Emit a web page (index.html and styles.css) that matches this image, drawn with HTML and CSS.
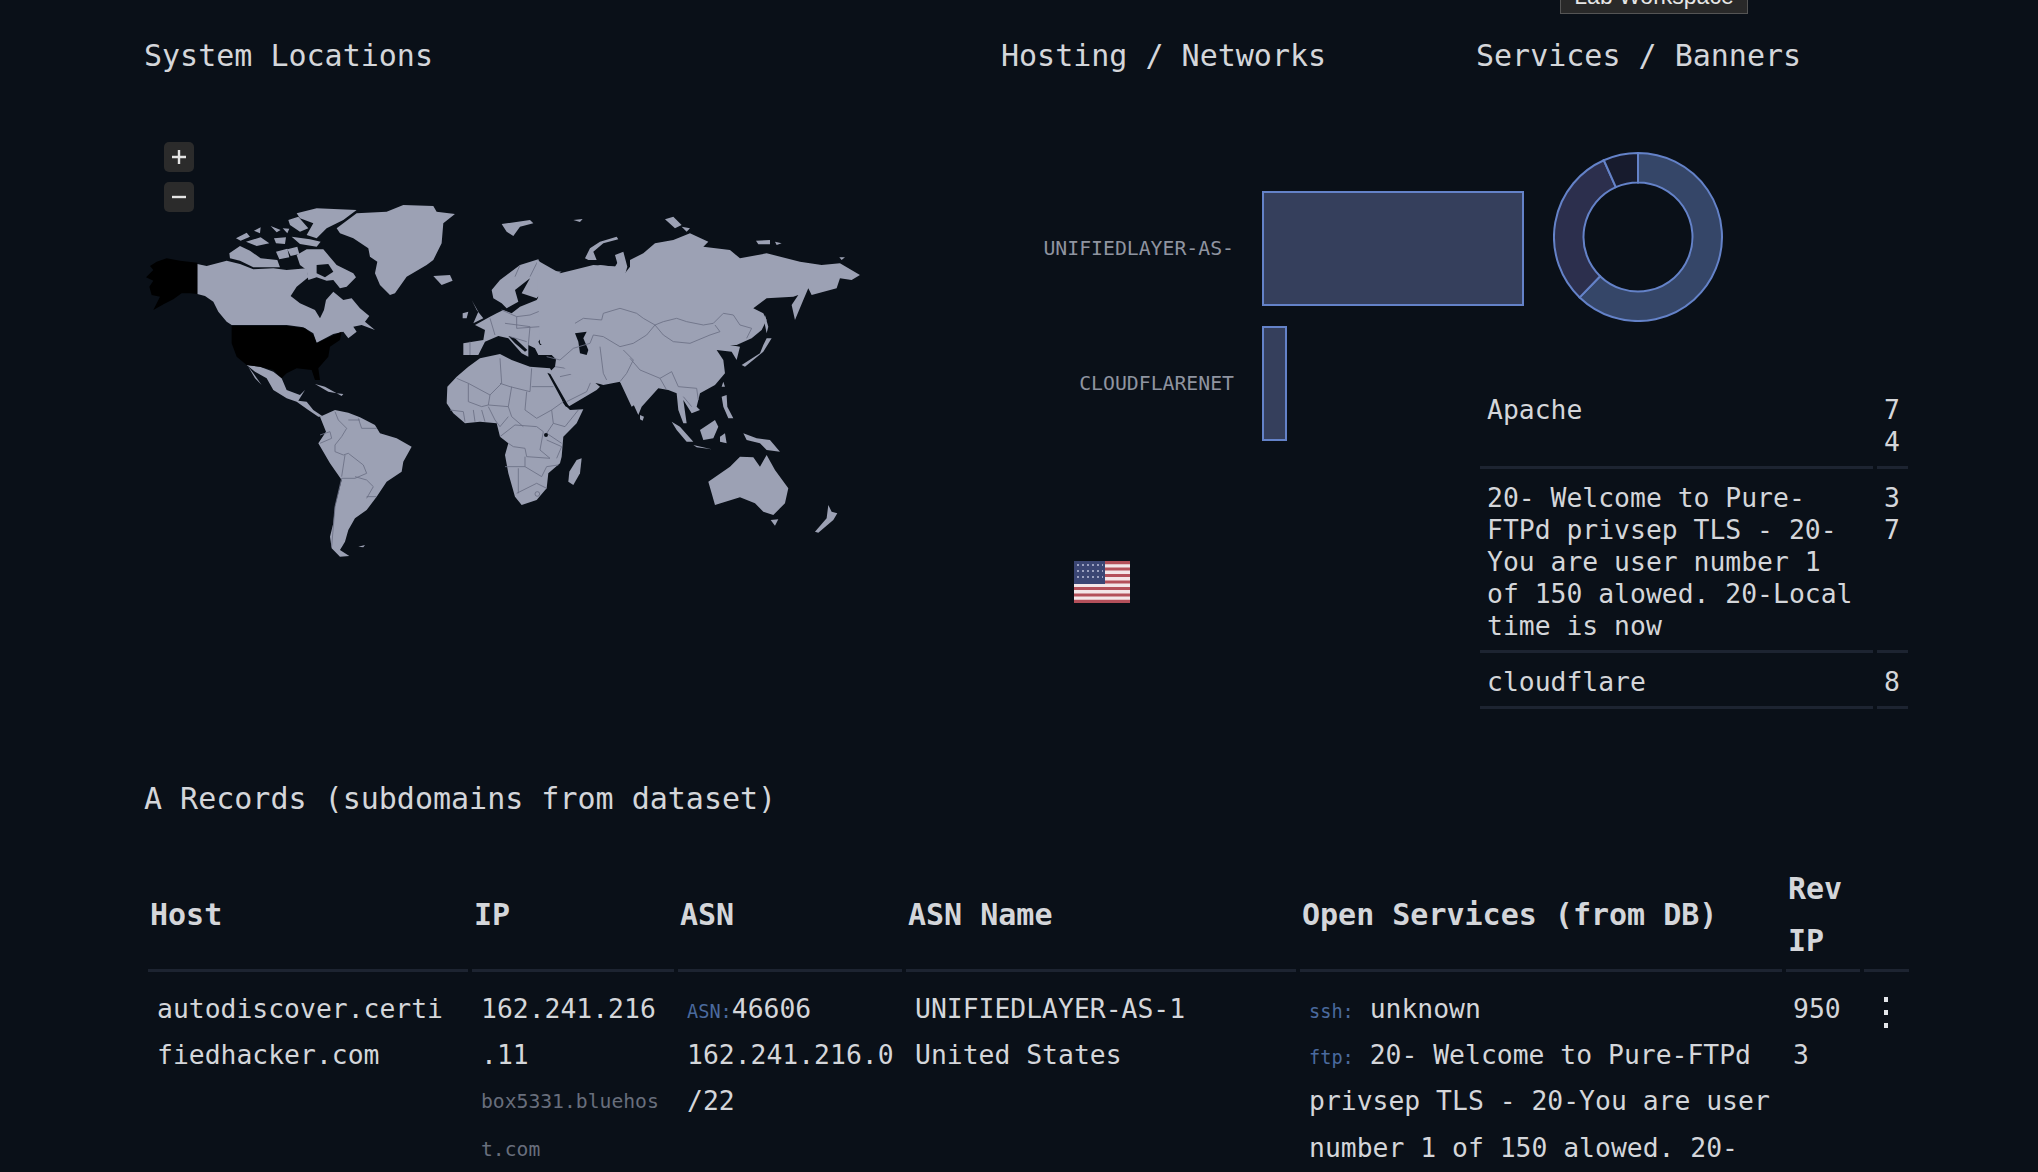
FILE: index.html
```html
<!DOCTYPE html>
<html lang="en">
<head>
	<meta charset="utf-8">
	<title>Lab Workspace</title>
	<link rel="stylesheet" href="styles.css">
</head>
<body>

<div class="tooltip">Lab Workspace</div>

<div class="page">
	<div class="summary">

		<section>
			<h2>System Locations</h2>
			<div class="map">
				<div class="zoom-btns">
					<div class="zoom-btn">
						<svg viewBox="0 0 30 30"><path d="M15 8v14M8 15h14"/></svg>
					</div>
					<div class="zoom-btn">
						<svg viewBox="0 0 30 30"><path d="M8 15h14"/></svg>
					</div>
				</div>
				<svg class="world" width="740" height="440" viewBox="144 130 740 440">
					<!-- north america -->
					<g transform="translate(140 190) scale(.3333)">
						<path class="land" d="M172 222L200 228 260 212 300 222 340 238 400 235 440 240 500 235 505 262 470 290 452 318 480 340 525 360 540 385 552 360 558 330 580 305 610 330 635 325 660 355 688 378 675 395 705 420 665 405 640 410 650 425 625 445 610 425 580 432 530 458 520 430 490 412 440 405 275 405 260 395 235 365 220 335 195 318 172 312Z"/>
						<path class="land" d="M470 195L500 178 550 178 590 225 640 250 648 262 620 290 600 295 580 270 560 272 530 262 505 270 500 240 480 225Z"/>
						<path class="bg" d="M530 225L565 222 580 245 555 262 530 250Z"/>
						<path class="land" d="M268 190L300 168 330 182 362 205 412 210 420 232 340 232 300 212 270 205Z"/>
						<path class="land" d="M288 145L320 128 330 140 302 152ZM318 155L362 142 388 160 350 168ZM392 108L422 120 410 127ZM402 145L438 142 435 162 408 160ZM408 185L442 176 448 202 418 208ZM442 178L472 170 478 192 452 198ZM342 122L362 112 360 130ZM428 115L448 116 442 130Z"/>
						<path class="land" d="M470 70L530 55 650 60 610 90 560 115 530 145 500 135 520 100 480 85ZM445 90L475 80 505 115 480 125 450 105ZM455 140L510 148 542 155 530 170 480 162Z"/>
						<path class="land" d="M590 115L650 70 740 65 790 45 880 48 890 65 945 72 910 100 905 160 880 210 860 225 800 260 765 310 750 315 720 285 705 250 712 215 690 200 685 175 640 145 600 130Z"/>
						<path class="land" d="M880 258L930 255 938 272 905 285Z"/>
						<path class="land" d="M320 525L360 530 400 545 425 565 440 600 480 615 495 600 475 632 500 635 520 660 550 680 535 680 505 660 470 635 440 625 400 600 380 565 345 545ZM325 530L340 550 365 585 345 565Z"/>
						<path class="land" d="M525 582L555 590 590 610 565 605ZM590 610L610 612 605 618Z"/>
						<path class="hit" d="M172 218L120 212 80 205 50 215 30 228 40 240 18 262 40 272 28 290 35 315 60 320 40 360 72 342 100 328 125 310 150 310 172 312Z"/>
						<path class="hit" d="M275 408L445 408 495 415 520 435 530 460 570 440 605 425 600 450 570 470 565 500 535 535 540 570 525 570 515 540 470 535 440 550 425 565 400 540 360 530 320 525 290 500 275 460Z"/>
					</g>
					<!-- south america -->
					<g transform="translate(220 340) scale(.3333)">
						<path class="land" d="M300 230L345 210 385 218 420 232 465 255 480 280 530 295 575 320 550 365 545 395 500 425 470 470 440 510 405 535 385 570 375 605 360 630 388 648 360 650 335 625 330 590 340 550 345 500 365 420 330 370 295 310 318 275ZM415 620L435 615 430 622Z"/>
						<path class="line" d="M345 215L355 240 380 265 365 290 345 315 345 335 370 345 385 340 430 375 440 400 405 415 365 415M415 235L425 265 470 265M385 240L420 240M300 285L330 275 335 295 300 310M365 415L345 500 335 620M405 410L440 420 460 440 440 475M375 345L365 410M440 470L470 470"/>
					</g>
					<!-- europe, africa -->
					<g transform="translate(440 210) scale(.3333)">
						<path class="land" d="M22 530L50 500 85 470 120 445 180 432 215 450 270 470 330 475 345 500 370 580 390 600 430 598 410 640 370 680 365 740 360 760 325 790 320 835 290 870 245 885 225 860 205 790 195 735 205 700 180 680 170 640 120 635 75 640 40 610 20 580Z"/>
						<path class="land" d="M410 750L425 745 420 790 400 825 385 815 388 785Z"/>
						<path class="land" d="M155 240L180 210 240 165 295 148 310 180 365 185 335 200 305 195 310 240 290 265 245 250 270 205 225 240 235 275 200 295 185 280 160 265Z"/>
						<path class="land" d="M620 150L570 170 555 190 550 130 525 170 480 165 420 190 385 190 380 210 340 215 305 245 290 270 240 290 215 310 190 300 170 310 150 320 105 345 135 360 130 390 70 400 70 435 115 435 135 395 175 378 205 385 245 430 265 440 265 405 285 415 295 435 350 435 345 470 325 490 370 570 385 590 470 540 480 530 455 510 430 505 415 480 440 510 490 525 540 515 575 590 620 560Z"/>
						<path class="bg" d="M295 395L310 375 345 368 370 395 340 405 300 405ZM415 370L440 365 430 385 445 420 440 435 420 430 415 395Z"/>
						<path class="bg" d="M322 488L331 492 384 584 396 598 376 589ZM415 480L425 485 455 515 440 510ZM205 378L225 385 262 420 255 425 225 400Z"/>
						<path class="land" d="M435 145L450 115 480 95 530 80 535 88 490 100 460 125 470 150 445 150Z"/>
						<path class="land" d="M185 42L270 30 280 40 240 50 220 78 200 65ZM95 270L110 300 130 325 100 340 115 305ZM68 310L85 305 80 325 68 325ZM400 30L428 27 420 36Z"/>
						<path class="line" d="M50 505L85 520 150 555 185 520 180 445M180 520L210 530 270 545 275 475M275 530L340 530M215 530L205 590 215 620 250 650M260 545L255 600 290 625 335 600 370 575M150 555L145 585 205 590M85 520L85 575 125 590 145 585M30 600L70 605 75 635M100 600L105 635M125 600L135 635M145 590L165 630 180 650 205 620M180 680L225 645 290 650 310 665 300 720 330 745 260 740 255 715 220 710 205 700M335 600L340 640 375 650 415 600M340 640L320 670 365 700M320 690L365 710 350 745M195 770L255 770 255 740M255 770L305 800 320 770 355 765M235 775L235 850M230 850L290 820 320 835"/>
						<circle class="line" cx="292" cy="852" r="7"/>
						<circle class="bg" cx="318" cy="675" r="6"/>
						<path class="line" d="M310 240L315 300 365 350M185 300L230 320 270 315 320 295M150 325L165 375M230 320L230 355 300 350 320 365M195 340L270 350M270 350L265 405M210 380L260 395M240 165L225 200M295 150L270 200M90 395L90 435M365 395L410 410M350 435L385 450 420 480M345 470L410 480M360 500L405 490M455 510L440 545 380 575"/>
					</g>
					<!-- asia, oceania -->
					<g transform="translate(540 210) scale(.3333)">
						<path class="land" d="M-10 150L60 190 100 180 160 165 235 170 225 135 250 125 262 170 255 195 270 180 270 150 310 130 345 100 400 90 450 70 505 95 490 110 570 120 600 145 680 130 780 155 845 165 900 160 960 195 935 210 900 205 890 235 815 255 805 235 790 270 765 330 755 285 775 255 760 260 680 265 640 295 670 310 680 330 665 360 635 385 590 405 570 405 600 410 590 450 575 425 530 420 550 450 555 490 525 525 480 550 470 590 480 600 455 610 430 570 440 640 430 640 415 600 410 550 385 540 355 535 305 590 295 615 270 560 240 515 210 510 180 520 155 520 100 500 0 400Z"/>
						<path class="bg" d="M105 370L140 365 130 385 145 420 140 435 120 430 115 395Z"/>
						<path class="land" d="M605 465L660 430 670 405 680 385 695 385 670 425 615 470ZM675 315L685 350 680 370 675 345ZM550 515L555 530 545 530ZM545 560L560 555 562 590 580 625 565 625 550 590ZM395 635L420 650 460 695 440 695 410 660ZM460 705L515 718 470 712ZM480 660L525 630 535 650 520 685 490 690ZM540 680L555 670 560 700 540 695ZM610 670L650 685 690 690 720 725 680 720 660 700 620 690ZM300 615L312 620 308 632 300 628Z"/>
						<path class="land" d="M505 815L570 770 600 740 640 742 660 770 680 735 705 780 745 835 735 880 700 915 670 905 645 880 600 862 525 885 515 850ZM692 930L715 928 705 947ZM865 885L875 905 892 910 880 930 835 968 825 965 860 925Z"/>
						<path class="land" d="M375 28L400 20 425 45 405 55ZM425 50L450 55 440 65ZM648 92L690 90 690 103 655 103ZM705 95L725 100 710 105ZM898 142L915 142 905 150Z"/>
						<path class="line" d="M105 340L130 325 185 330 190 310 240 295 290 310 310 325 345 345 370 335 410 325 440 335 490 345 520 340 550 310 580 315 600 345 635 355 620 385M345 345L370 375 400 395 450 400 510 375 540 365 525 345M345 345L320 375 280 400 240 410 190 380 160 375 150 400 100 415 60 450 20 440M180 410L190 490 200 510M250 420L280 450 260 490 240 515M270 445L300 480 360 505 395 485 415 530 470 535 475 570M360 505L380 540M430 560L455 590"/>
					</g>
				</svg>
			</div>
		</section>

		<section>
			<h2>Hosting / Networks</h2>
			<div class="bars">
				<div class="bar-row">
					<span class="bar-label">UNIFIEDLAYER-AS-</span>
					<div class="bar" style="width: 262px"></div>
				</div>
				<div class="bar-row">
					<span class="bar-label">CLOUDFLARENET</span>
					<div class="bar" style="width: 25px"></div>
				</div>
			</div>
			<svg class="flag" width="56" height="42" viewBox="0 0 56 42">
				<rect width="56" height="42" fill="#f3e6e8"/>
				<path d="M0 1.6h56M0 8h56M0 14.5h56M0 21h56M0 27.5h56M0 34h56M0 40.4h56" stroke="#b4505a" stroke-width="3.2"/>
				<rect width="31" height="23" fill="#3b4674"/>
				<path d="M3 4h26M3 10h26M3 16h26" stroke="#9aa0c0" stroke-width="2" stroke-dasharray="2 3"/>
			</svg>
		</section>

		<section>
			<h2>Services / Banners</h2>
			<svg class="donut" width="170" height="170" viewBox="-85 -85 170 170">
				<path fill="#354668" d="M0 -84A84 84 0 1 1 -58.35 60.43L-37.86 39.21A54.5 54.5 0 1 0 0 -54.5Z"/>
				<path fill="#2c2f4d" d="M-58.35 60.43A84 84 0 0 1 -34.17 -76.74L-22.17 -49.79A54.5 54.5 0 0 0 -37.86 39.21Z"/>
				<path fill="#171b2d" d="M-34.17 -76.74A84 84 0 0 1 0 -84L0 -54.5A54.5 54.5 0 0 0 -22.17 -49.79Z"/>
			</svg>
			<table class="services">
				<tr>
					<td>Apache</td>
					<td class="count">74</td>
				</tr>
				<tr>
					<td>20- Welcome to Pure-FTPd privsep TLS - 20-You are user number 1 of 150 alowed. 20-Local time is now</td>
					<td class="count">37</td>
				</tr>
				<tr>
					<td>cloudflare</td>
					<td class="count">8</td>
				</tr>
			</table>
		</section>

	</div>

	<h2 class="records-title">A Records (subdomains from dataset)</h2>

	<table class="records">
		<colgroup>
			<col class="c-host">
			<col class="c-ip">
			<col class="c-asn">
			<col class="c-name">
			<col class="c-open">
			<col class="c-rev">
			<col class="c-menu">
		</colgroup>
		<thead>
			<tr>
				<th>Host</th>
				<th>IP</th>
				<th>ASN</th>
				<th>ASN Name</th>
				<th>Open Services (from DB)</th>
				<th>Rev IP</th>
				<th></th>
			</tr>
		</thead>
		<tbody>
			<tr>
				<td class="brk host">autodiscover.certifiedhacker.com</td>
				<td class="brk">162.241.216.11<span class="sub">box5331.bluehost.com</span></td>
				<td class="brk"><span class="tag">ASN:</span>46606<br>162.241.216.0/22</td>
				<td>UNIFIEDLAYER-AS-1<br>United States</td>
				<td>
					<span class="tag">ssh:</span> unknown<br>
					<span class="tag">ftp:</span> 20- Welcome to Pure-FTPd privsep TLS - 20-You are user number 1 of 150 alowed. 20-Local time is now
				</td>
				<td class="brk rev">9503</td>
				<td>
					<svg class="kebab" width="6" height="32" viewBox="0 0 6 32"><path d="M1 1h4v5H1zM1 14h4v5H1zM1 27h4v5H1z"/></svg>
				</td>
			</tr>
		</tbody>
	</table>
</div>

</body>
</html>
```

FILE: styles.css
```css
html, body {
	height: 100%;
	margin: 0;
}
body {
	background-color: #0a1018;
	color: #d4d6da;
	font-family: "DejaVu Sans Mono", monospace;
	font-size: 26.4px;
	overflow: hidden;
}

.tooltip {
	position: absolute;
	left: 1560px;
	top: -21px;
	width: 186px;
	height: 33px;
	background-color: #292929;
	border: 1px solid #555;
	color: #e6e6e6;
	font-family: "Liberation Sans", sans-serif;
	font-size: 23px;
	line-height: 32px;
	text-align: center;
}

.page {
	width: 1768px;
	padding: 30px 0 0 144px;
}

h2 {
	margin: 0;
	font-size: 30px;
	font-weight: normal;
	line-height: 52px;
}

.summary {
	display: grid;
	grid-template-columns: 857px 475px 436px;
}

/* map */
.map {
	position: relative;
	margin-top: 48px;
}
.world {
	display: block;
	filter: blur(.4px);
}
.land {
	fill: #9ca1b4;
}
.hit {
	fill: #000;
}
.bg {
	fill: #0a1018;
}
.line {
	fill: none;
	stroke: #6c7185;
	stroke-width: 2.6;
}
.zoom-btns {
	position: absolute;
	left: 20px;
	top: 12px;
	display: flex;
	flex-direction: column;
	gap: 10px;
}
.zoom-btn {
	width: 30px;
	height: 30px;
	border-radius: 5px;
	background-color: #2b2b2b;
}
.zoom-btn svg {
	display: block;
}
.zoom-btn path {
	fill: none;
	stroke: #e4e4e4;
	stroke-width: 2.4;
}

/* hosting */
.bars {
	display: flex;
	flex-direction: column;
	gap: 20px;
	margin-top: 109px;
}
.bar-row {
	display: flex;
	align-items: center;
	gap: 28px;
	height: 115px;
}
.bar-label {
	flex: none;
	width: 233px;
	color: #8f94a0;
	font-size: 19.8px;
	text-align: right;
}
.bar {
	flex: none;
	box-sizing: border-box;
	height: 115px;
	background-color: #353f5c;
	border: 2px solid #6482c8;
}
.flag {
	display: block;
	margin: 120px 0 0 73px;
	filter: blur(.6px);
}

/* services */
.donut {
	display: block;
	margin: 70px 0 59px 77px;
}
.donut path {
	stroke: #6482c8;
	stroke-width: 2;
}
table {
	border-collapse: separate;
	border-spacing: 4px 0;
}
.services {
	width: 436px;
	table-layout: fixed;
	line-height: 32px;
}
.services td {
	padding: 13px 8px 8px 7px;
	border-bottom: 3px solid #1d2431;
	vertical-align: top;
}
.count {
	width: 16px;
	word-break: break-all;
}

/* records */
.records-title {
	margin-top: 64px;
}
.records {
	width: 1768px;
	margin-top: 38px;
	table-layout: fixed;
	line-height: 46.2px;
}
.c-host { width: 320px; }
.c-ip { width: 202px; }
.c-asn { width: 224px; }
.c-name { width: 390px; }
.c-open { width: 482px; }
.c-rev { width: 74px; }
.c-menu { width: 45px; }

.records th {
	padding: 0 0 2px 2px;
	border-bottom: 3px solid #1d2431;
	font-size: 30px;
	font-weight: bold;
	line-height: 52px;
	text-align: left;
}
.records td {
	padding: 14px 8px 0 9px;
	vertical-align: top;
}
.records .host {
	padding-right: 20px;
}
.records .rev {
	padding-left: 7px;
}
.brk {
	line-break: anywhere;
}
.sub {
	display: block;
	color: #686e7c;
	font-size: 19.7px;
	line-height: 48px;
}
.tag {
	color: #4a6a9e;
	font-size: 18.6px;
	line-height: 1;
}
.kebab {
	display: block;
	margin: 10px 0 0 10px;
}
.kebab path {
	fill: #e4e6ea;
}
```
